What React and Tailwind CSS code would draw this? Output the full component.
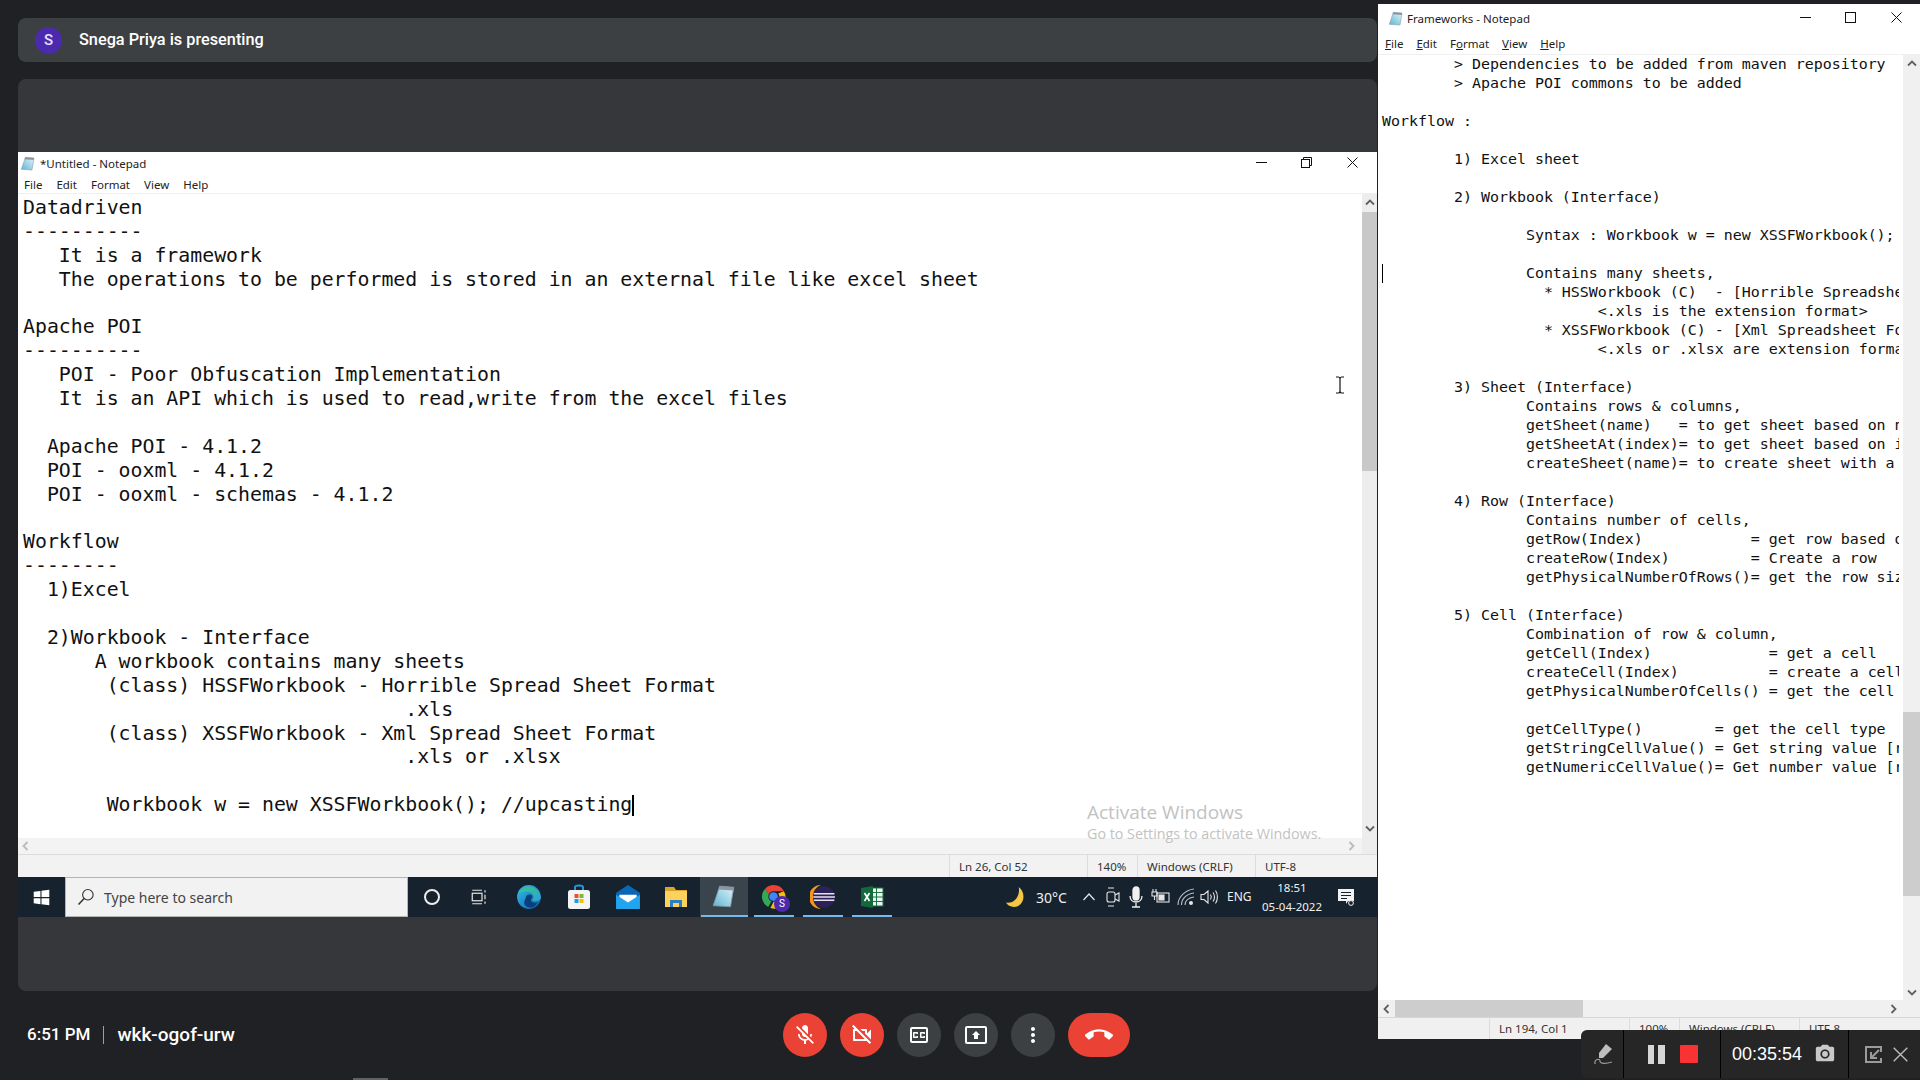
import React from 'react';
import {
    MdMicOff,
    MdOutlineVideocamOff,
    MdOutlineClosedCaption,
    MdOutlinePresentToAll,
    MdMoreVert,
    MdCallEnd,
    MdPhotoCamera,
} from 'react-icons/md';

const untitledLines = [
    'Datadriven',
    '----------',
    '   It is a framework',
    '   The operations to be performed is stored in an external file like excel sheet',
    '',
    'Apache POI',
    '----------',
    '   POI - Poor Obfuscation Implementation',
    '   It is an API which is used to read,write from the excel files',
    '',
    '  Apache POI - 4.1.2',
    '  POI - ooxml - 4.1.2',
    '  POI - ooxml - schemas - 4.1.2',
    '',
    'Workflow',
    '--------',
    '  1)Excel',
    '',
    '  2)Workbook - Interface',
    '      A workbook contains many sheets',
    '       (class) HSSFWorkbook - Horrible Spread Sheet Format',
    '                                .xls',
    '       (class) XSSFWorkbook - Xml Spread Sheet Format',
    '                                .xls or .xlsx',
    '',
];

const frameworkLines = [
    '        > Dependencies to be added from maven repository',
    '        > Apache POI commons to be added',
    '',
    'Workflow :',
    '',
    '        1) Excel sheet',
    '',
    '        2) Workbook (Interface)',
    '',
    '                Syntax : Workbook w = new XSSFWorkbook();',
    '',
    '                Contains many sheets,',
    '                  * HSSWorkbook (C)  - [Horrible Spreadsheet Format',
    '                        <.xls is the extension format>',
    '                  * XSSFWorkbook (C) - [Xml Spreadsheet Format',
    '                        <.xls or .xlsx are extension format>',
    '',
    '        3) Sheet (Interface)',
    '                Contains rows & columns,',
    '                getSheet(name)   = to get sheet based on name',
    '                getSheetAt(index)= to get sheet based on index',
    '                createSheet(name)= to create sheet with a name',
    '',
    '        4) Row (Interface)',
    '                Contains number of cells,',
    '                getRow(Index)            = get row based on index',
    '                createRow(Index)         = Create a row',
    '                getPhysicalNumberOfRows()= get the row size',
    '',
    '        5) Cell (Interface)',
    '                Combination of row & column,',
    '                getCell(Index)             = get a cell',
    '                createCell(Index)          = create a cell',
    '                getPhysicalNumberOfCells() = get the cell count',
    '',
    '                getCellType()        = get the cell type',
    '                getStringCellValue() = Get string value [row]',
    '                getNumericCellValue()= Get number value [row]',
];

// Iconos de la barra de tareas
const NotepadIcon = ({ size = 16 }) => (
    <svg width={size} height={size} viewBox="0 0 24 24">
        <defs>
            <linearGradient id="padFill" x1="0" y1="1" x2="1" y2="0">
                <stop offset="0" stopColor="#5fb4d2" />
                <stop offset="1" stopColor="#e4f5fa" />
            </linearGradient>
        </defs>
        <path d="M8 2 L21 3 L18 21 L2 20 Z" fill="url(#padFill)" stroke="#7f97a3" strokeWidth="0.8" />
        <path d="M8 2 L21 3 L20.5 6 L7 5 Z" fill="#8b959c" />
    </svg>
);

const WindowsLogo = () => (
    <svg width="17" height="17" viewBox="0 0 24 24" fill="#fff">
        <path d="M1 4 L10.5 2.7 V11.4 H1 Z M12 2.5 L23 1 V11.4 H12 Z M1 13 H10.5 V21.6 L1 20.2 Z M12 13 H23 V23 L12 21.5 Z" />
    </svg>
);

const SearchIcon = () => (
    <svg width="18" height="18" viewBox="0 0 24 24" fill="none" stroke="#333" strokeWidth="1.5">
        <circle cx="14.5" cy="9" r="7" />
        <path d="M9.5 14 L2 22" strokeWidth="2" />
    </svg>
);

const TaskViewIcon = () => (
    <svg width="18" height="18" viewBox="0 0 24 24" fill="none" stroke="#e6e6e6" strokeWidth="1.6">
        <rect x="3" y="7" width="13" height="10" />
        <path d="M3 3 H16 M3 21 H16 M20 3 V6 M20 9 V15 M20 18 V21" />
    </svg>
);

const EdgeIcon = () => (
    <svg width="26" height="26" viewBox="0 0 24 24">
        <defs>
            <linearGradient id="edgeA" x1="0" y1="0" x2="1" y2="1">
                <stop offset="0" stopColor="#35c1f1" />
                <stop offset="1" stopColor="#0c59a4" />
            </linearGradient>
            <linearGradient id="edgeB" x1="0" y1="0" x2="1" y2="1">
                <stop offset="0" stopColor="#3bc97f" />
                <stop offset="1" stopColor="#2d9fd8" />
            </linearGradient>
        </defs>
        <circle cx="12" cy="12" r="11" fill="url(#edgeA)" />
        <path d="M3 9 C5 1 20 -1 23 12 C23 16 17 17 15 15 C18 12 15 7 10 7 C6 7 4 8 3 9 Z" fill="url(#edgeB)" />
        <path d="M9 13 C9 10 12 9 14 10 C16 11 15 13 14 14 C13 16 16 18 20 17 C17 23 10 23 8 19 C7 17 8 15 9 13 Z" fill="#0a3f7d" />
    </svg>
);

const StoreIcon = () => (
    <svg width="24" height="26" viewBox="0 0 24 26">
        <path d="M8 7 V3 C8 1 16 1 16 3 V7" fill="none" stroke="#1f9ad6" strokeWidth="2" />
        <rect x="1" y="6" width="22" height="19" rx="2.5" fill="#f4f4f4" />
        <rect x="7.5" y="10" width="4" height="4" fill="#e8542c" />
        <rect x="12.5" y="10" width="4" height="4" fill="#7db928" />
        <rect x="7.5" y="15" width="4" height="4" fill="#1ba1e2" />
        <rect x="12.5" y="15" width="4" height="4" fill="#fbbc09" />
    </svg>
);

const MailIcon = () => (
    <svg width="26" height="26" viewBox="0 0 24 24">
        <path d="M1 8 L12 1 L23 8 V22 H1 Z" fill="#0a66b7" />
        <path d="M4 10 L20 10 V14 L12 18 L4 14 Z" fill="#fff" />
        <path d="M1 10 L12 17 L23 10 V23 H1 Z" fill="#21a5ee" />
    </svg>
);

const FolderIcon = () => (
    <svg width="24" height="26" viewBox="0 0 24 24">
        <path d="M1 2 H10 L12 5 H23 V22 H1 Z" fill="#d9a52d" />
        <path d="M1 6 H23 V22 H1 Z" fill="#fcd25c" />
        <path d="M6 22 V15 H18 V22 H15 V18 H9 V22 Z" fill="#2a7ec1" />
    </svg>
);

const ChromeIcon = () => (
    <div className="relative w-[26px] h-[26px]">
        <svg width="25" height="25" viewBox="0 0 24 24">
            <path d="M12 1 A11 11 0 0 1 22 7 H12 A5 5 0 0 0 7.5 10 L4 4.5 A11 11 0 0 1 12 1 Z" fill="#ea4335" />
            <path d="M4 4.5 L7.5 10 A5 5 0 0 0 10 16.6 L7 22 A11 11 0 0 1 4 4.5 Z" fill="#34a853" />
            <path d="M22 7 A11 11 0 0 1 9 23 L12 17 A5 5 0 0 0 16.5 9 Z" fill="#fbbc05" />
            <circle cx="12" cy="12" r="4.2" fill="#4285f4" />
        </svg>
        <div className="absolute -right-[3px] -bottom-[2px] w-[16px] h-[16px] rounded-full bg-[#4b2aad] text-white text-[10px] leading-[16px] text-center font-['Roboto',sans-serif]">S</div>
    </div>
);

const EclipseIcon = () => (
    <svg width="26" height="26" viewBox="0 0 24 24">
        <path d="M10 1 A11 11 0 0 0 10 23 A12 12 0 0 1 10 1 Z" fill="#f7941e" />
        <circle cx="13" cy="12" r="10" fill="#2c2255" />
        <path d="M3.5 9 H22.5 M3 12 H23 M3.5 15 H22.5" stroke="#e6e3f0" strokeWidth="1.5" />
    </svg>
);

const ExcelIcon = () => (
    <svg width="24" height="26" viewBox="0 0 24 24">
        <rect x="10" y="3" width="13" height="18" fill="#eaf4ee" stroke="#1d7044" strokeWidth="1" />
        <path d="M10 7.5 H23 M10 12 H23 M10 16.5 H23 M16.5 3 V21" stroke="#1d7044" strokeWidth="1" />
        <path d="M1 3 L13 1 V23 L1 21 Z" fill="#12693c" />
        <path d="M4.5 8 L9.5 16 M9.5 8 L4.5 16" stroke="#fff" strokeWidth="1.7" />
    </svg>
);

const MoonIcon = () => (
    <svg width="22" height="22" viewBox="0 0 24 24">
        <path d="M15 1 C22 6 22 18 14 22 C9 24 3 22 1 18 C9 20 17 12 15 1 Z" fill="#f6c544" />
    </svg>
);

const TrayChevron = () => (
    <svg width="14" height="14" viewBox="0 0 14 14" fill="none" stroke="#e6e6e6" strokeWidth="1.2"><path d="M1.5 10 L7 4 L12.5 10" /></svg>
);

const MeetNowIcon = () => (
    <svg width="16" height="22" viewBox="0 0 16 22" fill="none" stroke="#e6e6e6" strokeWidth="1.1">
        <rect x="2" y="6" width="8" height="10" rx="2" />
        <path d="M10 9 L14 7 V15 L10 13 M3 2 H9 M3 20 H9" />
    </svg>
);

const MicIcon = () => (
    <svg width="16" height="22" viewBox="0 0 16 22" fill="none" stroke="#f0f0f0" strokeWidth="1.3">
        <rect x="5" y="1" width="6" height="13" rx="3" fill="#f0f0f0" />
        <path d="M2 10 C2 18 14 18 14 10 M8 17 V21 M4 21 H12" />
    </svg>
);

const BatteryIcon = () => (
    <svg width="20" height="18" viewBox="0 0 20 18" fill="none" stroke="#e6e6e6" strokeWidth="1.1">
        <rect x="6" y="5" width="12" height="9" />
        <rect x="8" y="7" width="5" height="5" fill="#e6e6e6" />
        <path d="M1 4 H6 V8 H1 Z M2 1 V4 M5 1 V4 M3.5 8 V12" />
    </svg>
);

const WifiIcon = () => (
    <svg width="18" height="18" viewBox="0 0 18 18" fill="none" stroke="#b9c0c6" strokeWidth="1.1">
        <path d="M1 17 C1 9 8 2 17 1 M4.5 17 C4.5 11 9 6 17 5 M8 17 C8 13 11 10 17 9" />
        <circle cx="14" cy="15" r="2" fill="#e6e6e6" stroke="none" />
    </svg>
);

const VolumeIcon = () => (
    <svg width="18" height="18" viewBox="0 0 18 18" fill="none" stroke="#e6e6e6" strokeWidth="1.1">
        <path d="M1 6.5 H4 L8 3 V15 L4 11.5 H1 Z M10.5 6.5 C11.5 8 11.5 10 10.5 11.5 M13 4.5 C15 7 15 11 13 13.5 M15.5 2.5 C18 6 18 12 15.5 15.5" />
    </svg>
);

const ActionCenterIcon = () => (
    <svg width="18" height="18" viewBox="0 0 18 18">
        <path d="M1 1 H17 V13 H11 L9 16 V13 H1 Z" fill="#f2f2f2" />
        <path d="M4 4.5 H14 M4 7.5 H14 M4 10.5 H10" stroke="#16202b" strokeWidth="1.1" />
        <circle cx="14" cy="15" r="2.4" fill="#16202b" stroke="#f2f2f2" strokeWidth="1" />
    </svg>
);

const RestoreIcon = () => (
    <svg width="11" height="11" viewBox="0 0 11 11" fill="none" stroke="#111" strokeWidth="1">
        <rect x="0.5" y="2.5" width="8" height="8" />
        <path d="M2.5 2.5 V0.5 H10.5 V8.5 H8.5" />
    </svg>
);

const MaximizeIcon = () => (
    <svg width="11" height="11" viewBox="0 0 11 11" fill="none" stroke="#111" strokeWidth="1">
        <rect x="0.5" y="0.5" width="10" height="10" />
    </svg>
);

const CloseIcon = ({ color = '#111', size = 11 }) => (
    <svg width={size} height={size} viewBox="0 0 11 11" fill="none" stroke={color} strokeWidth="1">
        <path d="M0.5 0.5 L10.5 10.5 M10.5 0.5 L0.5 10.5" />
    </svg>
);

const Chevron = ({ dir, color = '#606060' }) => {
    const paths = {
        up: 'M1 6.5 L5 2.5 L9 6.5',
        down: 'M1 3.5 L5 7.5 L9 3.5',
        left: 'M6.5 1 L2.5 5 L6.5 9',
        right: 'M3.5 1 L7.5 5 L3.5 9',
    };
    return (
        <svg width="10" height="10" viewBox="0 0 10 10" fill="none" stroke={color} strokeWidth="1.8"><path d={paths[dir]} /></svg>
    );
};

const StatusCell = ({ width, children }) => (
    <div style={{ width }} className="h-full shrink-0 border-l border-[#dcdcdc] pl-[9px] pt-[1px] flex items-center overflow-hidden whitespace-nowrap">
        {children}
    </div>
);

const CallButton = ({ red, wide, children }) => (
    <button className={`h-[44px] rounded-full flex items-center justify-center text-white text-[24px] ${wide ? 'w-[62px]' : 'w-[44px]'} ${red ? 'bg-[#ea4335]' : 'bg-[#3c4043]'}`}>
        {children}
    </button>
);

const TaskIcon = ({ running, children }) => (
    <div className="relative w-[40px] h-full mr-[9px] flex items-center justify-center">
        {children}
        {running && <div className="absolute left-0 right-0 bottom-0 h-[2px] bg-[#76b9ed]"></div>}
    </div>
);

function Taskbar() {
    return (
        <div className="h-[40px] shrink-0 flex items-center bg-[#16222d] text-[#f0f0f0] font-['Noto_Sans',sans-serif]">
            <div className="w-[47px] h-full flex items-center justify-center"><WindowsLogo /></div>
            <div className="w-[343px] h-full bg-[#f2f2f2] border border-[#b5b5b5] flex items-center pl-[11px] gap-[9px] text-[14px] text-[#444]">
                <SearchIcon />
                <span className="pt-[1px]">Type here to search</span>
            </div>
            <div className="w-[46px] flex justify-center ml-[1px]">
                <div className="w-[16px] h-[16px] rounded-full border-2 border-[#ededed]"></div>
            </div>
            <div className="w-[48px] flex justify-center"><TaskViewIcon /></div>
            <div className="w-[52px] flex justify-center"><EdgeIcon /></div>
            <div className="w-[48px] flex justify-center"><StoreIcon /></div>
            <div className="w-[49px] flex justify-center"><MailIcon /></div>
            <div className="w-[48px] flex justify-center"><FolderIcon /></div>
            <div className="w-[48px] h-full mr-[6px] bg-[#3a444d] relative flex items-center justify-center">
                <NotepadIcon size={26} />
                <div className="absolute left-[1px] right-0 bottom-0 h-[2px] bg-[#76b9ed]"></div>
            </div>
            <TaskIcon running><ChromeIcon /></TaskIcon>
            <TaskIcon running><EclipseIcon /></TaskIcon>
            <TaskIcon running><ExcelIcon /></TaskIcon>
            <div className="flex items-center ml-[103px]">
                <div className="w-[24px] flex justify-center"><MoonIcon /></div>
                <span className="ml-[8px] text-[14px] w-[34px]">30°C</span>
                <div className="w-[18px] ml-[10px] flex justify-center"><TrayChevron /></div>
                <div className="w-[16px] ml-[7px] flex justify-center"><MeetNowIcon /></div>
                <div className="w-[16px] ml-[7px] flex justify-center"><MicIcon /></div>
                <div className="w-[20px] ml-[7px] flex justify-center"><BatteryIcon /></div>
                <div className="w-[18px] ml-[6px] flex justify-center"><WifiIcon /></div>
                <div className="w-[18px] ml-[5px] flex justify-center"><VolumeIcon /></div>
                <span className="ml-[9px] text-[12px] w-[25px]">ENG</span>
                <div className="ml-[12px] w-[56px] text-[11.5px] leading-[19px] text-center whitespace-nowrap flex flex-col items-center">
                    <span>18:51</span>
                    <span>05-04-2022</span>
                </div>
                <div className="ml-[17px] flex justify-center"><ActionCenterIcon /></div>
            </div>
        </div>
    );
}

function UntitledNotepad() {
    return (
        <div className="flex-1 min-h-0 flex flex-col bg-white font-['Noto_Sans',sans-serif] relative">
            <div className="h-[24px] shrink-0 flex items-center pl-[2px] text-[11.5px] text-[#222]">
                <NotepadIcon />
                <span className="ml-[4px]">*Untitled - Notepad</span>
                <div className="ml-auto flex items-center -mt-[3px]">
                    <div className="w-[11px] h-[1px] bg-[#111]"></div>
                    <div className="ml-[34px]"><RestoreIcon /></div>
                    <div className="ml-[35px] mr-[19px]"><CloseIcon /></div>
                </div>
            </div>
            <div className="h-[17px] shrink-0 flex items-center pl-[6px] gap-[14px] text-[11.5px] text-[#222]">
                <span>File</span><span>Edit</span><span>Format</span><span>View</span><span>Help</span>
            </div>
            <div className="flex-1 min-h-0 flex border-t-[1px] border-[#efefef]">
                <div className="flex-1 min-w-0 flex flex-col">
                    <div className="flex-1 min-h-0 pl-[5px] pt-[2px] overflow-hidden whitespace-pre font-['DejaVu_Sans_Mono',monospace] text-[19.85px] leading-[23.9px] text-[#111]">
                        {untitledLines.map((line, i) => <div key={i} className="h-[23.9px]">{line}</div>)}
                        <div className="h-[23.9px] flex items-center">
                            {'       Workbook w = new XSSFWorkbook(); //upcasting'}
                            <div className="w-[2px] h-[21px] bg-black"></div>
                        </div>
                    </div>
                    <div className="h-[16px] shrink-0 bg-[#f3f3f3] flex items-center justify-between px-[3px]">
                        <Chevron dir="left" color="#bbb" />
                        <div className="mr-[3px]"><Chevron dir="right" color="#bbb" /></div>
                    </div>
                </div>
                <div className="w-[15px] shrink-0 flex flex-col bg-[#ededed]">
                    <div className="h-[18px] flex items-center justify-center"><Chevron dir="up" /></div>
                    <div className="h-[259px] bg-[#c8c8c8]"></div>
                    <div className="flex-1"></div>
                    <div className="h-[31px] flex items-start justify-center"><Chevron dir="down" /></div>
                </div>
            </div>
            <div className="h-[23px] shrink-0 bg-[#f2f2f2] border-t border-[#dcdcdc] flex pl-[931px] text-[11.5px] text-[#333]">
                <StatusCell width={138}>Ln 26, Col 52</StatusCell>
                <StatusCell width={50}>140%</StatusCell>
                <StatusCell width={118}>Windows (CRLF)</StatusCell>
                <StatusCell width={120}>UTF-8</StatusCell>
            </div>
            {/* Marca de agua */}
            <div className="absolute left-[1069px] top-[647px] text-[#c2c2c2] font-['Open_Sans',sans-serif] pointer-events-none">
                <div className="text-[19px] leading-[26px]">Activate Windows</div>
                <div className="text-[14.3px] leading-[18px] whitespace-nowrap">Go to Settings to activate Windows.</div>
            </div>
            {/* Cursor I-beam */}
            <svg className="absolute left-[1317px] top-[224px]" width="10" height="18" viewBox="0 0 10 18" fill="none" stroke="#111" strokeWidth="1.2">
                <path d="M1 1 H3.5 Q5 1 5 3 V15 Q5 17 3.5 17 H1 M9 1 H6.5 Q5 1 5 3 M5 15 Q5 17 6.5 17 H9" />
            </svg>
        </div>
    );
}

function FrameworksNotepad() {
    return (
        <div className="h-[1035px] flex flex-col bg-white font-['Noto_Sans',sans-serif] relative">
            <div className="h-[29px] shrink-0 flex items-center pl-[10px] text-[11.5px] text-[#222]">
                <NotepadIcon />
                <span className="ml-[3px]">Frameworks - Notepad</span>
                <div className="ml-auto flex items-center -mt-[2px]">
                    <div className="w-[11px] h-[1px] bg-[#111]"></div>
                    <div className="ml-[34px]"><MaximizeIcon /></div>
                    <div className="ml-[35px] mr-[18px]"><CloseIcon /></div>
                </div>
            </div>
            <div className="h-[21px] shrink-0 flex items-center pl-[7px] gap-[13px] text-[11.5px] text-[#222]">
                <span><u>F</u>ile</span><span><u>E</u>dit</span><span>F<u>o</u>rmat</span><span><u>V</u>iew</span><span><u>H</u>elp</span>
            </div>
            <div className="flex-1 min-h-0 flex border-t border-[#f0f0f0]">
                <div className="flex-1 min-w-0 mr-[4px] pl-[4px] overflow-hidden whitespace-pre font-['DejaVu_Sans_Mono',monospace] text-[14.95px] leading-[19px] text-[#111] relative">
                    {frameworkLines.map((line, i) => <div key={i} className="h-[19px]">{line}</div>)}
                    <div className="absolute left-[4px] top-[209px] w-[1px] h-[19px] bg-black"></div>
                </div>
                <div className="w-[17px] shrink-0 flex flex-col bg-[#f0f0f0]">
                    <div className="h-[17px] flex items-center justify-center"><Chevron dir="up" /></div>
                    <div className="h-[640px]"></div>
                    <div className="h-[184px] bg-[#cdcdcd]"></div>
                    <div className="flex-1"></div>
                    <div className="h-[17px] flex items-center justify-center"><Chevron dir="down" /></div>
                </div>
            </div>
            <div className="h-[17px] shrink-0 bg-[#f0f0f0] flex items-center">
                <div className="w-[17px] flex justify-center"><Chevron dir="left" /></div>
                <div className="w-[188px] h-full bg-[#cdcdcd]"></div>
                <div className="ml-auto w-[26px] mr-[14px] flex justify-center"><Chevron dir="right" /></div>
            </div>
            <div className="h-[22px] shrink-0 bg-[#f0f0f0] border-t border-[#d7d7d7] flex pl-[111px] text-[11.5px] text-[#333]">
                <StatusCell width={140}>Ln 194, Col 1</StatusCell>
                <StatusCell width={50}>100%</StatusCell>
                <StatusCell width={120}>Windows (CRLF)</StatusCell>
                <StatusCell width={121}>UTF-8</StatusCell>
            </div>
        </div>
    );
}

function RecorderBar() {
    return (
        <div className="absolute right-0 bottom-[2px] w-[339px] h-[48px] rounded-l-md bg-[#262626] flex items-center text-white font-['Liberation_Sans',sans-serif]">
            <div className="w-[43px] h-full flex items-center justify-center border-r border-black pl-[4px]">
                <svg width="22" height="24" viewBox="0 0 22 24" fill="none">
                    <path d="M13 2 L19 7 L10 16 L6 16 L6 11 Z" fill="#bdbdbd" />
                    <path d="M2 22 C1 17 7 16 7 19 C7 22 13 22 19 20" stroke="#9a9a9a" strokeWidth="1.2" />
                </svg>
            </div>
            <div className="w-[97px] h-full flex items-center border-r border-black pl-[24px]">
                <div className="w-[6px] h-[19px] bg-[#d6d6d6]"></div>
                <div className="w-[7px] h-[19px] bg-[#d6d6d6] ml-[4px]"></div>
                <div className="w-[18px] h-[18px] bg-[#f93333] rounded-[1px] ml-[15px]"></div>
            </div>
            <div className="w-[128px] h-full flex items-center border-r border-black pl-[11px]">
                <span className="text-[18px] w-[68px]">00:35:54</span>
                <MdPhotoCamera className="ml-[14px] text-[#c9c9c9] text-[22px]" />
            </div>
            <div className="flex items-center pl-[15px]">
                <svg width="19" height="19" viewBox="0 0 19 19" fill="none" stroke="#9b9b9b" strokeWidth="2">
                    <path d="M17 7 V2 H2 V17 H17 V13 M15 5 L7 13 M7 7 V13 H13" />
                </svg>
                <div className="ml-[10px]"><CloseIcon color="#bdbdbd" size={15} /></div>
            </div>
        </div>
    );
}

export default function App() {
    return (
        <div className="relative w-[1920px] h-[1080px] overflow-hidden bg-[#202124] flex font-['Roboto',sans-serif]">
            {/* Presentación */}
            <div className="w-[1377px] shrink-0 flex flex-col">
                <div className="ml-[18px] mt-[18px] h-[44px] shrink-0 rounded-lg bg-[#3c4043] flex items-center pl-[17px] text-white">
                    <div className="w-[27px] h-[27px] rounded-full bg-[#4b2aad] flex items-center justify-center text-[15px] font-medium text-[#e8e0ff]">S</div>
                    <span className="ml-[17px] text-[16.3px] font-medium">Snega Priya is presenting</span>
                </div>
                <div className="ml-[18px] mt-[17px] h-[912px] shrink-0 rounded-lg overflow-hidden bg-[#36373b] pt-[73px] pb-[74px] flex flex-col">
                    <UntitledNotepad />
                    <Taskbar />
                </div>
                <div className="relative flex-1 flex items-center pb-[1px]">
                    <div className="ml-[27px] flex items-center text-white font-medium">
                        <span className="text-[17px]">6:51 PM</span>
                        <div className="w-[1px] h-[18px] bg-[#9aa0a6] mx-[13px]"></div>
                        <span className="text-[19px]">wkk-ogof-urw</span>
                    </div>
                    <div className="absolute left-[783px] top-[22px] flex gap-[13px]">
                        <CallButton red><MdMicOff /></CallButton>
                        <CallButton red><MdOutlineVideocamOff /></CallButton>
                        <CallButton><MdOutlineClosedCaption /></CallButton>
                        <CallButton><MdOutlinePresentToAll /></CallButton>
                        <CallButton><MdMoreVert /></CallButton>
                        <CallButton red wide><MdCallEnd className="text-[28px]" /></CallButton>
                    </div>
                    <div className="absolute left-[353px] bottom-0 w-[35px] h-[2px] bg-[#5f6368]"></div>
                </div>
            </div>
            {/* Ventana derecha */}
            <div className="ml-[1px] w-[542px] shrink-0 pt-[4px]">
                <FrameworksNotepad />
            </div>
            <RecorderBar />
        </div>
    );
}
